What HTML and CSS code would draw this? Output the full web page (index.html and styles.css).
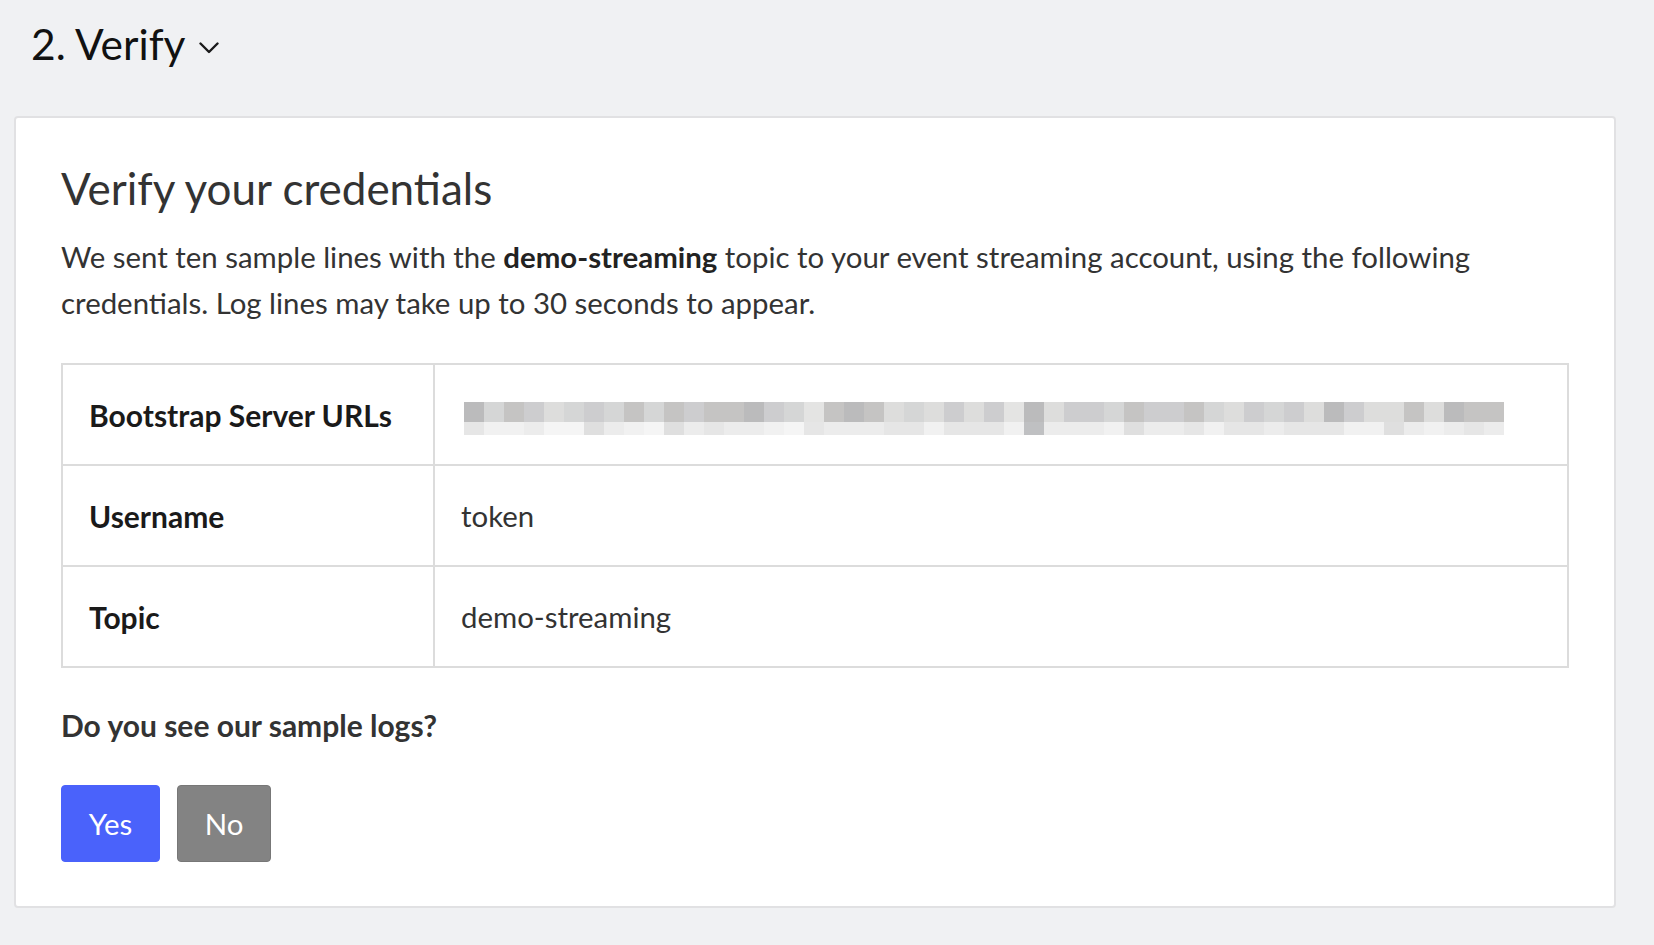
FILE: index.html
```html
<!DOCTYPE html>
<html lang="en">
<head>
<meta charset="utf-8">
<title>Verify</title>
<link rel="stylesheet" href="styles.css">
</head>
<body>
<header class="step-header">
  <h1 class="step-title">2. Verify</h1>
  <svg class="chevron" width="20" height="12" viewBox="0 0 20 12" aria-hidden="true"><path d="M1.5 1.5 L10 10 L18.5 1.5" fill="none" stroke="#1a1a1a" stroke-width="2.4" stroke-linecap="round" stroke-linejoin="round"/></svg>
</header>
<main class="card">
  <h2 class="card-title">Verify your credentials</h2>
  <p class="intro">We sent ten sample lines with the <strong>demo-streaming</strong> topic to your event streaming account, using the following credentials. Log lines may take up to 30 seconds to appear.</p>
  <div class="creds">
    <div class="cell label">Bootstrap Server URLs</div>
    <div class="cell value">
      <div class="redacted">
        <div class="strip top">
          <i class="k1"></i><i class="k4"></i><i class="k2"></i><i class="k3"></i><i class="k5"></i><i class="k4"></i><i class="k3"></i><i class="k4"></i><i class="k2"></i><i class="k4"></i><i class="k2"></i><i class="k3"></i><i class="k2"></i><i class="k2"></i><i class="k1"></i><i class="k3"></i><i class="k4"></i><i class="k6"></i><i class="k2"></i><i class="k1"></i><i class="k2"></i><i class="k5"></i><i class="k4"></i><i class="k5"></i><i class="k3"></i><i class="k5"></i><i class="k3"></i><i class="k6"></i><i class="k1"></i><i class="k5"></i><i class="k3"></i><i class="k3"></i><i class="k4"></i><i class="k2"></i><i class="k3"></i><i class="k3"></i><i class="k2"></i><i class="k4"></i><i class="k5"></i><i class="k3"></i><i class="k4"></i><i class="k3"></i><i class="k5"></i><i class="k1"></i><i class="k3"></i><i class="k5"></i><i class="k5"></i><i class="k2"></i><i class="k5"></i><i class="k1"></i><i class="k2"></i><i class="k2"></i>
        </div>
        <div class="strip bottom">
          <i class="l2"></i><i class="l4"></i><i class="l4"></i><i class="l3"></i><i class="l5"></i><i class="l5"></i><i class="l1"></i><i class="l3"></i><i class="l4"></i><i class="l5"></i><i class="l1"></i><i class="l3"></i><i class="l2"></i><i class="l3"></i><i class="l3"></i><i class="l4"></i><i class="l5"></i><i class="l2"></i><i class="l3"></i><i class="l3"></i><i class="l3"></i><i class="l2"></i><i class="l2"></i><i class="l4"></i><i class="l2"></i><i class="l2"></i><i class="l2"></i><i class="l4"></i><i class="lx"></i><i class="l3"></i><i class="l3"></i><i class="l3"></i><i class="l4"></i><i class="l1"></i><i class="l3"></i><i class="l3"></i><i class="l2"></i><i class="l4"></i><i class="l2"></i><i class="l2"></i><i class="l3"></i><i class="l2"></i><i class="l2"></i><i class="l2"></i><i class="l4"></i><i class="l4"></i><i class="l1"></i><i class="l3"></i><i class="l4"></i><i class="l3"></i><i class="l2"></i><i class="l3"></i>
        </div>
      </div>
    </div>
    <div class="cell label">Username</div>
    <div class="cell value">token</div>
    <div class="cell label">Topic</div>
    <div class="cell value">demo-streaming</div>
  </div>
  <p class="question">Do you see our sample logs?</p>
  <div class="actions">
    <button class="btn btn-yes" type="button">Yes</button>
    <button class="btn btn-no" type="button">No</button>
  </div>
</main>
</body>
</html>
```
FILE: styles.css
```css
* { box-sizing: border-box; }
html, body { height: 100%; }
body {
  margin: 0;
  background: #f0f1f3;
  font-family: Lato, "Noto Sans", sans-serif;
  color: #333;
}
.step-header {
  display: flex;
  align-items: center;
  gap: 13px;
  padding: 16px 0 0 31px;
  height: 72px;
}
.step-title {
  margin: 0;
  font-size: 42.5px;
  font-weight: 400;
  line-height: 56px;
  color: #111;
}
.chevron {
  margin-top: 8px;
}
.card {
  margin: 44px 38px 0 14px;
  background: #fff;
  border: 2px solid #e1e1e3;
  border-radius: 4px;
  padding: 44px 45px 44px;
}
.card-title {
  margin: 0;
  font-size: 44px;
  font-weight: 400;
  line-height: 53px;
  color: #333;
}
.intro {
  margin: 19px 0 0;
  font-size: 29.4px;
  line-height: 46px;
  color: #333;
}
.intro strong { font-weight: 700; color: #222; }
.creds {
  margin-top: 37px;
  display: grid;
  grid-template-columns: 372px 1fr;
  border-top: 2px solid #dcdcdc;
  border-left: 2px solid #dcdcdc;
}
.cell {
  height: 101px;
  display: flex;
  align-items: center;
  padding: 0 26px;
  border-right: 2px solid #dcdcdc;
  border-bottom: 2px solid #dcdcdc;
  font-size: 29.4px;
}
.label { font-weight: 700; color: #1a1a1a; font-size: 30px; }
.value { color: #333; }
.redacted {
  display: flex;
  flex-direction: column;
  margin-left: 3px;
  margin-top: 7px;
}
.strip { display: flex; }
.strip i { display: block; width: 20px; }
.strip.top i { height: 20px; }
.strip.bottom i { height: 13px; }
.k1 { background: #bbbbbc; }
.k2 { background: #c5c4c3; }
.k3 { background: #cdcdcf; }
.k4 { background: #d5d6d6; }
.k5 { background: #dddddc; }
.k6 { background: #e4e4e3; }
.l1 { background: #dfdfdf; }
.l2 { background: #e6e6e6; }
.l3 { background: #ececec; }
.l4 { background: #f1f1f1; }
.l5 { background: #f5f5f5; }
.lx { background: #bfc0c2; }
.question {
  margin: 34px 0 0;
  font-size: 30px;
  line-height: 46px;
  font-weight: 700;
  color: #333;
}
.actions {
  display: flex;
  gap: 17px;
  margin-top: 37px;
}
.btn {
  height: 77px;
  padding: 0;
  font-family: Lato, "Noto Sans", sans-serif;
  font-size: 29.4px;
  color: #fff;
  border-radius: 4px;
  cursor: pointer;
}
.btn-yes {
  background: #4a62fb;
  border: 1px solid #4a62fb;
  width: 99px;
}
.btn-no {
  background: #838383;
  border: 1px solid #777;
  width: 94px;
}
```
